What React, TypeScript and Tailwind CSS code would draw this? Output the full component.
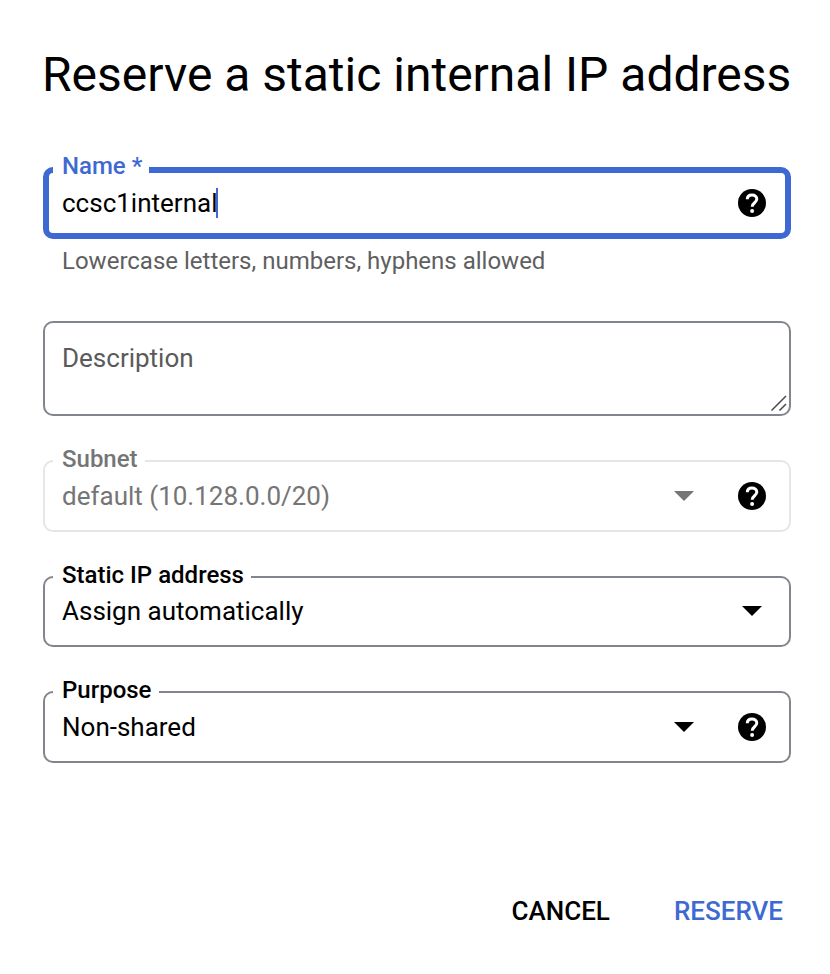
import type { ReactNode } from "react";
import clsx from "clsx";

function HelpIcon() {
  return (
    <svg viewBox="0 0 28 28" className="block size-7 shrink-0" aria-hidden="true">
      <circle cx="14" cy="14" r="14" fill="black" />
      <path
        d="M9.3 10.2C9.3 7.5 11.3 6 14 6s4.8 1.6 4.8 4.1c0 3.6-4.6 3.7-4.6 7.6"
        fill="none"
        stroke="white"
        strokeWidth="3"
      />
      <circle cx="14.1" cy="21.9" r="2" fill="white" />
    </svg>
  );
}

function Arrow({ className }: { className: string }) {
  return (
    <svg viewBox="0 0 20 10" className={clsx("block h-2.5 w-5 shrink-0", className)} aria-hidden="true">
      <path d="M0 0h20L10 10z" />
    </svg>
  );
}

type FieldProps = {
  label: string;
  boxClass: string;
  labelClass: string;
  children: ReactNode;
};

function Field({ label, boxClass, labelClass, children }: FieldProps) {
  return (
    <div className={clsx("relative rounded-[10px]", boxClass)}>
      <div className="flex h-full items-center text-[26px] leading-[30px]">{children}</div>
      <span
        className={clsx(
          "absolute bg-white pl-[9px] text-2xl leading-7 font-medium whitespace-nowrap",
          labelClass,
        )}
      >
        {label}
      </span>
    </div>
  );
}

export default function App() {
  return (
    <main className="flex h-[974px] w-[830px] flex-col bg-white pr-[39px] pl-[43px] font-['Roboto',sans-serif] text-black">
      <h1 className="mt-[47px] -ml-px h-14 text-5xl leading-[56px] whitespace-nowrap">
        Reserve a static internal IP address
      </h1>

      <Field
        label="Name *"
        boxClass="mt-16 h-[72px] border-6 border-[#3f69d2] pr-[19px] pl-[13px]"
        labelClass="-top-[21px] left-1 w-24 text-[#3f69d2]"
      >
        <span className="whitespace-nowrap">ccsc1internal</span>
        <span className="-ml-px h-[30px] w-0.5 bg-[#3f69d2]" />
        <span className="ml-auto">
          <HelpIcon />
        </span>
      </Field>
      <p className="mt-2 pl-[19px] text-2xl leading-7 text-[#5f5f5f]">
        Lowercase letters, numbers, hyphens allowed
      </p>

      <div className="relative mt-[46px] h-[95px] rounded-[10px] border-2 border-[#80868b] px-[17px] pt-5 text-[26px] leading-[30px] text-[#5a5a5a]">
        Description
        <svg
          viewBox="0 0 16 16"
          className="absolute right-0.5 bottom-[3px] size-4 stroke-[#4a4a4a]"
          strokeWidth="1.5"
          aria-hidden="true"
        >
          <path d="M0.5 15.5 15 1M8.5 15.5 15 9" />
        </svg>
      </div>

      <Field
        label="Subnet"
        boxClass="mt-11 h-[72px] border-2 border-[#e6e6e6] pr-[23px] pl-[17px] text-[#757575]"
        labelClass="-top-[17px] left-2 w-[92px]"
      >
        <span>default (10.128.0.0/20)</span>
        <span className="ml-auto flex items-center gap-11">
          <Arrow className="fill-[#757575]" />
          <HelpIcon />
        </span>
      </Field>

      <Field
        label="Static IP address"
        boxClass="mt-11 h-[71px] border-2 border-[#80868b] pr-[27px] pb-px pl-[17px]"
        labelClass="-top-[17px] left-2 w-[198px]"
      >
        <span>Assign automatically</span>
        <span className="ml-auto">
          <Arrow className="fill-black" />
        </span>
      </Field>

      <Field
        label="Purpose"
        boxClass="mt-11 h-[72px] border-2 border-[#80868b] pr-[23px] pl-[17px]"
        labelClass="-top-[17px] left-2 w-[106px]"
      >
        <span>Non-shared</span>
        <span className="ml-auto flex items-center gap-11">
          <Arrow className="fill-black" />
          <HelpIcon />
        </span>
      </Field>

      <div className="mt-[133px] flex justify-end gap-16 pr-2 text-[26px] leading-[30px] font-medium">
        <button type="button">CANCEL</button>
        <button type="button" className="text-[#3f69d2]">
          RESERVE
        </button>
      </div>
    </main>
  );
}
